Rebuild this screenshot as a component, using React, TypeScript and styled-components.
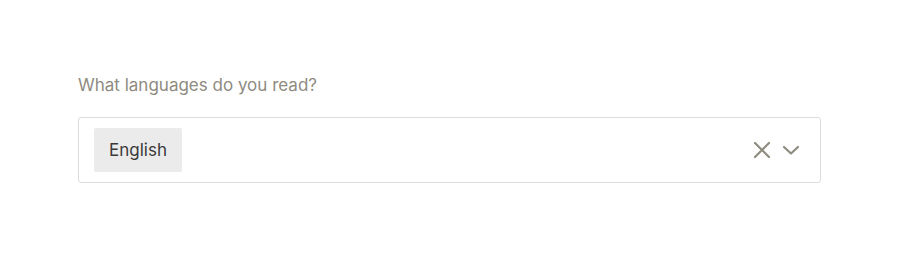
import React from 'react';
import styled, { createGlobalStyle } from 'styled-components';

const GlobalStyle = createGlobalStyle`
  html, body {
    margin: 0;
    padding: 0;
    background: #ffffff;
    font-family: Inter, "Noto Sans", sans-serif;
  }
`;

const Page = styled.div`
  width: 900px;
  height: 262px;
  box-sizing: border-box;
  padding: 73px 79px 0 78px;
`;

const Label = styled.div`
  font-size: 17px;
  line-height: 24px;
  color: #8e8b7f;
  margin-bottom: 20px;
`;

const SelectBox = styled.div`
  display: flex;
  align-items: center;
  box-sizing: border-box;
  height: 66px;
  padding: 10px 20px 10px 15px;
  border: 1px solid #dcdcdc;
  border-radius: 3px;
  background: #fff;
`;

const Values = styled.div`
  display: flex;
  flex: 1;
  gap: 8px;
`;

const Chip = styled.div`
  height: 44px;
  display: flex;
  align-items: center;
  padding: 0 15px;
  background: #ebebeb;
  border-radius: 2px;
  font-size: 17px;
  color: #3a3a3a;
`;

const Indicators = styled.div`
  display: flex;
  align-items: center;
  gap: 10px;
  color: #8e8b7f;
`;

const IconButton = styled.span`
  display: flex;
  align-items: center;
  justify-content: center;
  cursor: pointer;
`;

const App: React.FC = () => {
  const languages = ['English'];

  return (
    <Page>
      <GlobalStyle />
      <Label>What languages do you read?</Label>
      <SelectBox>
        <Values>
          {languages.map((lang) => (
            <Chip key={lang}>{lang}</Chip>
          ))}
        </Values>
        <Indicators>
          <IconButton>
            <svg width="20" height="20" viewBox="0 0 20 20" fill="none">
              <path d="M3 3L17 17M17 3L3 17" stroke="currentColor" strokeWidth="2.2" strokeLinecap="round" />
            </svg>
          </IconButton>
          <IconButton>
            <svg width="18" height="18" viewBox="0 0 18 18" fill="none">
              <path d="M2 6L9 12.5L16 6" stroke="currentColor" strokeWidth="2.2" strokeLinecap="round" strokeLinejoin="round" />
            </svg>
          </IconButton>
        </Indicators>
      </SelectBox>
    </Page>
  );
};

export default App;
